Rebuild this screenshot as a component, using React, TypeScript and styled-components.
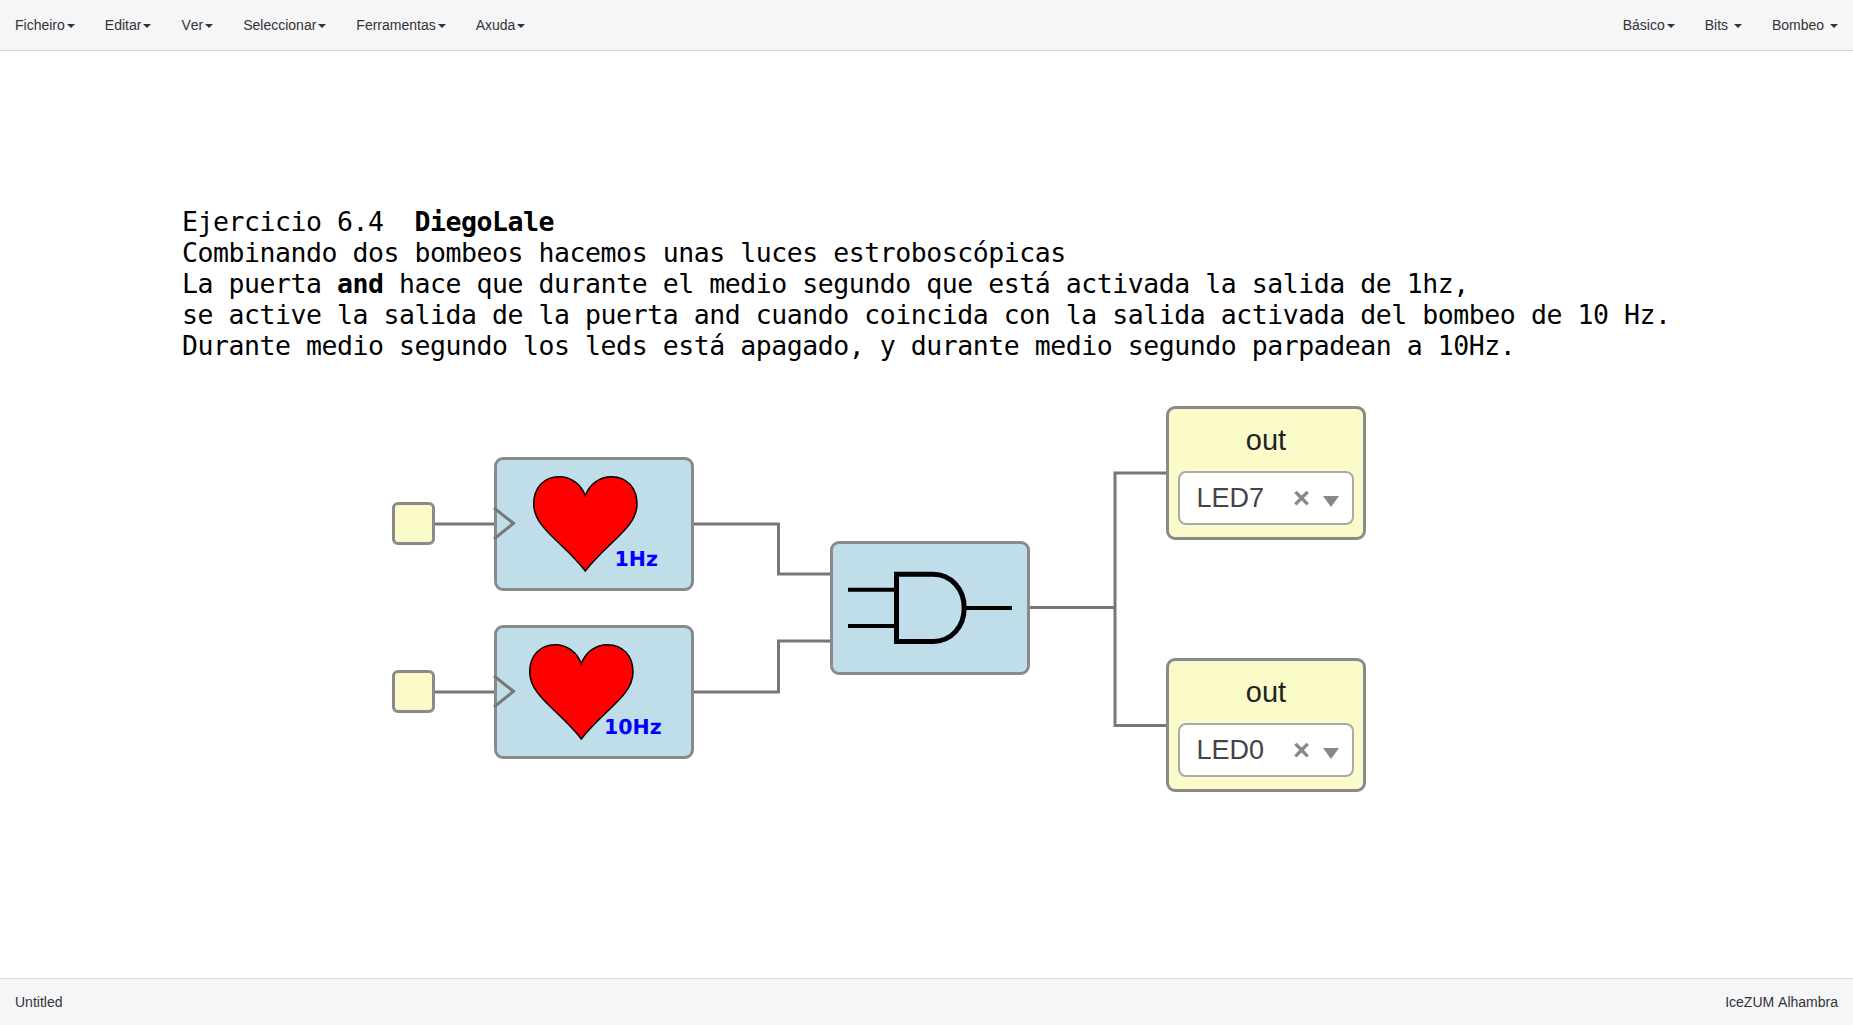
import React from "react";
import styled, { createGlobalStyle } from "styled-components";

const Global = createGlobalStyle`
  html, body { margin: 0; padding: 0; height: 100%; background: #fff; }
  #root { height: 100%; }
  * { box-sizing: border-box; }
`;

const Page = styled.div`
  height: 1025px;
  display: flex;
  flex-direction: column;
  font-family: "Liberation Sans", Arial, sans-serif;
  font-size: 14px;
  font-kerning: none;
  color: #333;
  overflow: hidden;
`;

const NavBar = styled.nav`
  height: 51px;
  flex: none;
  display: flex;
  justify-content: space-between;
  background: #f5f6f8;
  border-bottom: 1px solid #d6dadc;
`;

const MenuGroup = styled.ul`
  display: flex;
  margin: 0;
  padding: 0;
  list-style: none;
`;

const MenuItem = styled.li`
  padding: 15px;
  line-height: 20px;
  color: #333;
  white-space: pre;
`;

const Caret = styled.span`
  display: inline-block;
  width: 0;
  height: 0;
  margin-left: 2px;
  vertical-align: middle;
  border-top: 4px solid #333;
  border-left: 4px solid transparent;
  border-right: 4px solid transparent;
`;

const Canvas = styled.main`
  position: relative;
  flex: 1;
`;

const Note = styled.div`
  position: absolute;
  left: 182px;
  top: 155px;
  font-family: "DejaVu Sans Mono", "Liberation Mono", monospace;
  font-size: 26.5px;
  letter-spacing: -0.45px;
  line-height: 31px;
  color: #000;
  white-space: pre;
`;

const Wires = styled.svg`
  position: absolute;
  left: 0;
  top: 0;
  width: 1853px;
  height: 926px;
`;

const Node = styled.div<{ $x: number; $y: number }>`
  position: absolute;
  left: ${(p) => p.$x}px;
  top: ${(p) => p.$y}px;
  border: 3px solid #8a8a8a;
`;

const PinBox = styled(Node)`
  width: 43px;
  height: 43px;
  border-radius: 6px;
  background: #fbfbc9;
`;

const Block = styled(Node)`
  width: 200px;
  height: 134px;
  border-radius: 9px;
  background: #c0deea;
`;

const OutBlock = styled(Block)`
  background: #fbfbc9;
  display: flex;
  flex-direction: column;
  align-items: center;
  padding: 0 9px;
`;

const OutLabel = styled.div`
  font-size: 29px;
  line-height: 33px;
  margin-top: 15px;
  height: 47px;
  color: #222;
`;

const Select = styled.div`
  width: 176px;
  height: 54px;
  flex: none;
  display: flex;
  align-items: center;
  background: #fff;
  border: 2px solid #aaa;
  border-radius: 8px;
  padding-left: 16.5px;
  font-size: 27px;
  color: #444;
`;

const SelectValue = styled.span`
  flex: 1;
`;

const ClearMark = styled.span`
  font-weight: 700;
  font-size: 29px;
  line-height: 1;
  color: #888;
  margin-right: 13px;
`;

const Arrow = styled.span`
  width: 0;
  height: 0;
  margin: 6px 13px 0 0;
  border-top: 11px solid #888;
  border-left: 8.5px solid transparent;
  border-right: 8.5px solid transparent;
`;

const Art = styled.svg`
  position: absolute;
  overflow: visible;
`;

const Footer = styled.footer`
  height: 47px;
  flex: none;
  display: flex;
  align-items: center;
  justify-content: space-between;
  padding: 0 15px;
  background: #f5f6f8;
  border-top: 1px solid #d6dadc;
  color: #333;
`;

const Heart: React.FC<{ left: number; label: string; labelX: number }> = ({ left, label, labelX }) => (
  <Art width="160" height="110" viewBox="0 0 160 110" style={{ left, top: 15.5 }}>
    <path
      d="M52.3 19.5 C48 8 38 0.7 26 0.7 C11 0.7 0.7 12 0.7 28 C0.7 52 30 66 52.3 95 C74.6 66 104 52 104 28 C104 12 93.6 0.7 78.6 0.7 C66.6 0.7 56.6 8 52.3 19.5 Z"
      fill="#f00"
      stroke="#000"
      strokeWidth="1.5"
    />
    <text
      x={labelX}
      y="89.5"
      fontFamily="'DejaVu Sans', sans-serif"
      fontWeight="700"
      fontSize="20.5"
      fill="#00f"
      textRendering="geometricPrecision"
    >
      {label}
    </text>
  </Art>
);

const ClockMark = () => (
  <Art width="24" height="36" viewBox="0 0 24 36" style={{ left: -3, top: 45.5 }}>
    <path d="M0 2 L19.5 17.3 L0 33" fill="none" stroke="#777" strokeWidth="3" />
  </Art>
);

const Menu: React.FC<{ label: string; gap?: boolean }> = ({ label, gap }) => (
  <MenuItem>
    {label}
    {gap ? " " : ""}
    <Caret />
  </MenuItem>
);

const OutNode: React.FC<{ y: number; led: string }> = ({ y, led }) => (
  <OutBlock $x={1166} $y={y}>
    <OutLabel>out</OutLabel>
    <Select>
      <SelectValue>{led}</SelectValue>
      <ClearMark>×</ClearMark>
      <Arrow />
    </Select>
  </OutBlock>
);

export default function App() {
  return (
    <Page>
      <Global />
      <NavBar>
        <MenuGroup>
          {["Ficheiro", "Editar", "Ver", "Seleccionar", "Ferramentas", "Axuda"].map((m) => (
            <Menu key={m} label={m} />
          ))}
        </MenuGroup>
        <MenuGroup>
          <Menu label="Básico" />
          <Menu label="Bits" gap />
          <Menu label="Bombeo" gap />
        </MenuGroup>
      </NavBar>
      <Canvas>
        <Note>
          {"Ejercicio 6.4  "}
          <b>DiegoLale</b>
          {"\nCombinando dos bombeos hacemos unas luces estroboscópicas\nLa puerta "}
          <b>and</b>
          {" hace que durante el medio segundo que está activada la salida de 1hz,\nse active la salida de la puerta and cuando coincida con la salida activada del bombeo de 10 Hz.\nDurante medio segundo los leds está apagado, y durante medio segundo parpadean a 10Hz."}
        </Note>
        <Wires>
          <g fill="none" stroke="#777" strokeWidth="3">
            <path d="M435 473 H494" />
            <path d="M435 641 H494" />
            <path d="M694 473 H778.5 V523 H830" />
            <path d="M694 641 H778.5 V590 H830" />
            <path d="M1030 556.5 H1115 M1115 422 V674.5 M1115 422 H1166 M1115 674.5 H1166" strokeLinecap="square" />
          </g>
        </Wires>
        <PinBox $x={392} $y={451} />
        <PinBox $x={392} $y={619} />
        <Block $x={494} $y={406}>
          <Heart left={36} label="1Hz" labelX={81.5} />
          <ClockMark />
        </Block>
        <Block $x={494} $y={574}>
          <Heart left={32} label="10Hz" labelX={75} />
          <ClockMark />
        </Block>
        <Block $x={830} $y={490}>
          <Art width="170" height="90" viewBox="0 0 170 90" style={{ left: 15, top: 42 }}>
            <g fill="none" stroke="#000">
              <path d="M0 3.7 H48 M0 40 H48 M116 22 H164" strokeWidth="4" />
              <path d="M48.5 -11.8 H85 C103 -11.8 116.2 3 116.2 22 C116.2 41 103 55.5 85 55.5 H48.5 Z" strokeWidth="5" />
            </g>
          </Art>
        </Block>
        <OutNode y={355} led="LED7" />
        <OutNode y={607} led="LED0" />
      </Canvas>
      <Footer>
        <span>Untitled</span>
        <span>IceZUM Alhambra</span>
      </Footer>
    </Page>
  );
}
